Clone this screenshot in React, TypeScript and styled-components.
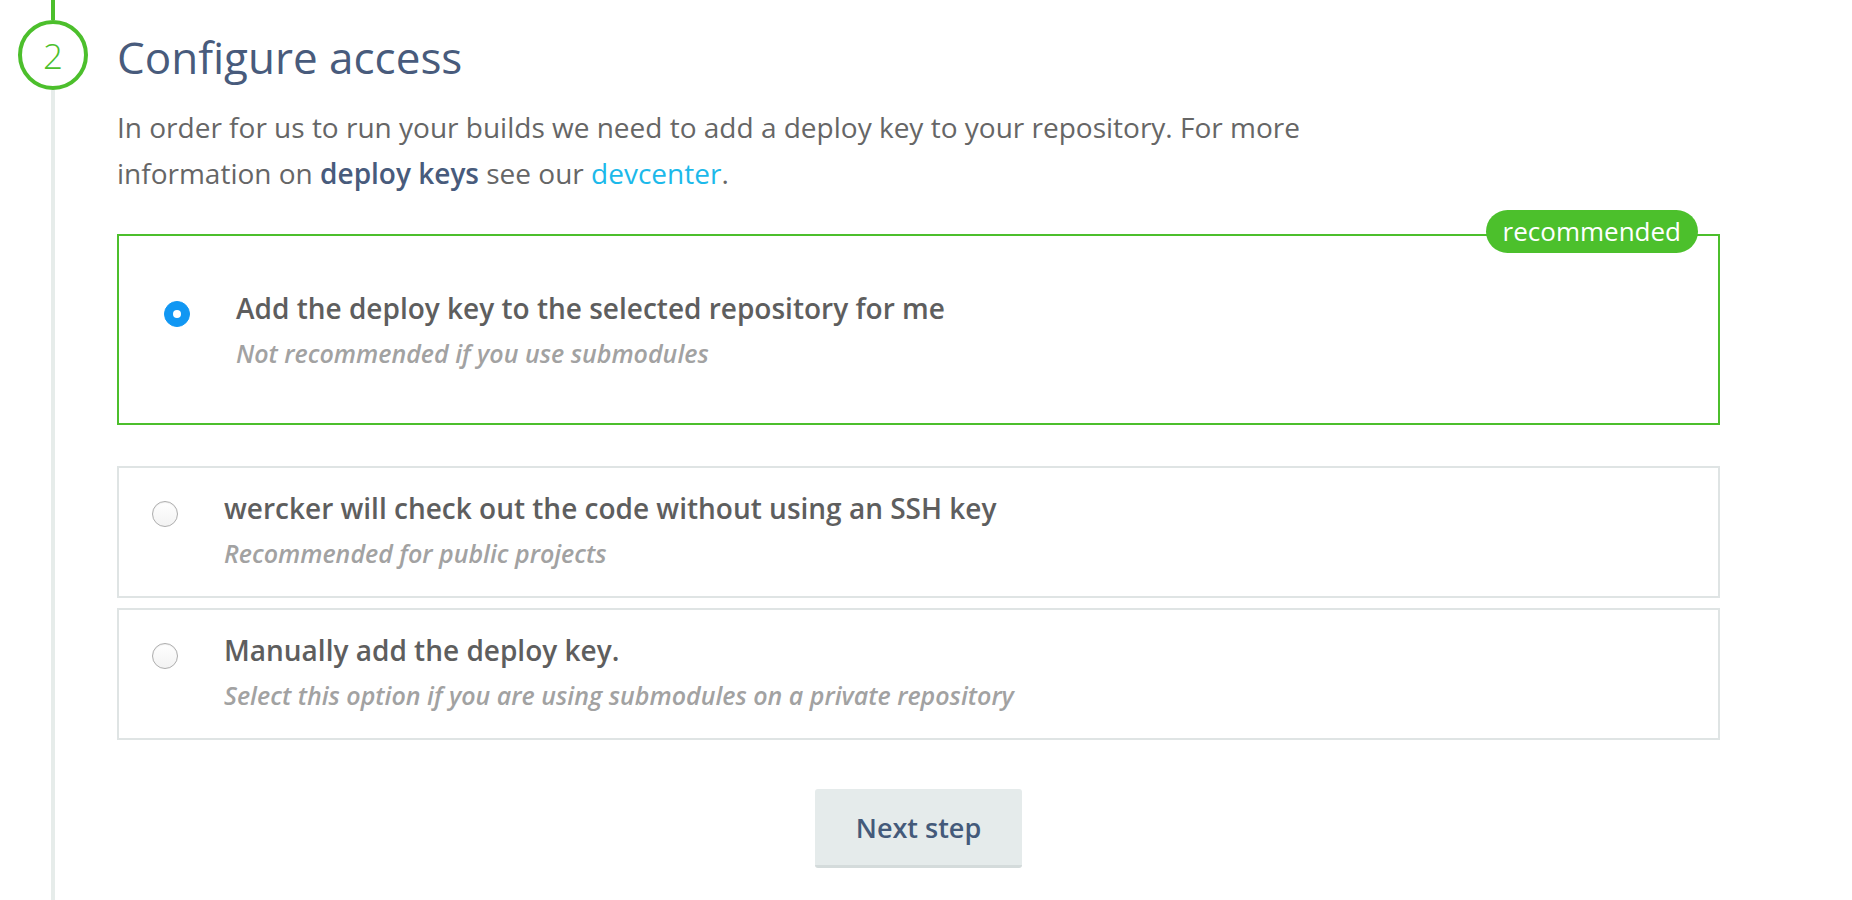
import React, { useState } from "react";
import styled, { createGlobalStyle } from "styled-components";

const GlobalStyle = createGlobalStyle`
  html, body {
    margin: 0;
    padding: 0;
    background: #ffffff;
  }
  body {
    font-family: "Open Sans", "Noto Sans", "Liberation Sans", sans-serif;
    -webkit-font-smoothing: antialiased;
  }
  * { box-sizing: border-box; }
`;

const Page = styled.div`
  display: flex;
  min-height: 100vh;
  gap: 11px;
`;

const Rail = styled.div`
  width: 106px;
  flex: none;
  display: flex;
  flex-direction: column;
  align-items: center;
`;

const RailSegment = styled.div<{ $done?: boolean; $grow?: boolean }>`
  width: 4px;
  height: ${(p) => (p.$grow ? "auto" : "20px")};
  flex: ${(p) => (p.$grow ? "1 1 auto" : "none")};
  background: ${(p) => (p.$done ? "#4cbf2c" : "#e6ecea")};
`;

const StepBadge = styled.div`
  width: 70px;
  height: 70px;
  flex: none;
  border: 4px solid #4cbf2c;
  border-radius: 50%;
  display: flex;
  align-items: center;
  justify-content: center;
  color: #4cbf2c;
  font-size: 35px;
  font-weight: 300;
  line-height: 1;
`;

const Content = styled.div`
  flex: 0 1 1603px;
  display: flex;
  flex-direction: column;
  padding-top: 32px;
`;

const Title = styled.h1`
  margin: 0;
  font-size: 44px;
  line-height: 50px;
  font-weight: 400;
  color: #485b7c;
`;

const Intro = styled.p`
  margin: 22px 0 0;
  max-width: 1280px;
  font-size: 28px;
  line-height: 46px;
  color: #666666;
`;

const Strong = styled.strong`
  font-weight: 600;
  color: #485b7c;
`;

const Link = styled.a`
  color: #1cb9ea;
  text-decoration: none;
`;

const Options = styled.div`
  display: flex;
  flex-direction: column;
  margin-top: 38px;
`;

const OptionBox = styled.label<{ $selected?: boolean }>`
  position: relative;
  display: flex;
  align-items: flex-start;
  gap: 46px;
  cursor: pointer;
  border: 2px solid ${(p) => (p.$selected ? "#4cbf2c" : "#dfe4e4")};
  padding: ${(p) => (p.$selected ? "50px 40px 47px 45px" : "18px 33px 20px 33px")};
  margin-bottom: ${(p) => (p.$selected ? "41px" : "10px")};
`;

const Recommended = styled.span`
  position: absolute;
  top: -26px;
  right: 20px;
  height: 43px;
  padding: 0 17px;
  border-radius: 22px;
  background: #4cc02c;
  color: #ffffff;
  font-size: 26px;
  line-height: 43px;
  font-weight: 400;
`;

const RadioMark = styled.span<{ $checked?: boolean; $offset: number }>`
  flex: none;
  width: 26px;
  height: 26px;
  margin-top: ${(p) => p.$offset}px;
  border-radius: 50%;
  display: flex;
  align-items: center;
  justify-content: center;
  background: ${(p) => (p.$checked ? "#1197f3" : "linear-gradient(#ffffff, #f3f3f3)")};
  border: 1px solid ${(p) => (p.$checked ? "#1197f3" : "#adadad")};
  box-shadow: ${(p) => (p.$checked ? "none" : "inset 0 1px 1px rgba(0,0,0,0.06)")};

  &::after {
    content: "";
    display: ${(p) => (p.$checked ? "block" : "none")};
    width: 8px;
    height: 8px;
    border-radius: 50%;
    background: #ffffff;
  }
`;

const HiddenInput = styled.input`
  position: absolute;
  opacity: 0;
  width: 0;
  height: 0;
  margin: 0;
`;

const OptionText = styled.span`
  display: flex;
  flex-direction: column;
`;

const OptionLabel = styled.span`
  font-size: 28px;
  line-height: 45px;
  font-weight: 600;
  color: #5e5e5e;
`;

const OptionHint = styled.span`
  font-size: 25px;
  line-height: 45px;
  font-style: italic;
  font-weight: 600;
  color: #a2a2a2;
`;

const Actions = styled.div`
  display: flex;
  justify-content: center;
  margin-top: 39px;
  padding-bottom: 30px;
`;

const NextButton = styled.button`
  width: 207px;
  height: 79px;
  border: none;
  border-bottom: 3px solid #d4dbdb;
  border-radius: 3px;
  background: #e5ebeb;
  color: #445a7a;
  font-family: inherit;
  font-size: 27px;
  font-weight: 600;
  cursor: pointer;
`;

type Option = {
  id: string;
  label: string;
  hint: string;
  recommended?: boolean;
};

const options: Option[] = [
  {
    id: "auto",
    label: "Add the deploy key to the selected repository for me",
    hint: "Not recommended if you use submodules",
    recommended: true,
  },
  {
    id: "none",
    label: "wercker will check out the code without using an SSH key",
    hint: "Recommended for public projects",
  },
  {
    id: "manual",
    label: "Manually add the deploy key.",
    hint: "Select this option if you are using submodules on a private repository",
  },
];

export default function App() {
  const [selected, setSelected] = useState("auto");
  return (
    <>
      <GlobalStyle />
      <Page>
        <Rail>
          <RailSegment $done />
          <StepBadge>2</StepBadge>
          <RailSegment $grow />
        </Rail>
        <Content>
          <Title>Configure access</Title>
          <Intro>
            In order for us to run your builds we need to add a deploy key to your repository. For more
            information on <Strong>deploy keys</Strong> see our <Link href="#">devcenter</Link>.
          </Intro>
          <Options>
            {options.map((o) => {
              const isSel = selected === o.id;
              return (
                <OptionBox key={o.id} $selected={isSel}>
                  <HiddenInput
                    type="radio"
                    name="access"
                    checked={isSel}
                    onChange={() => setSelected(o.id)}
                  />
                  {o.recommended && <Recommended>recommended</Recommended>}
                  <RadioMark $checked={isSel} $offset={15} />
                  <OptionText>
                    <OptionLabel>{o.label}</OptionLabel>
                    <OptionHint>{o.hint}</OptionHint>
                  </OptionText>
                </OptionBox>
              );
            })}
          </Options>
          <Actions>
            <NextButton type="button">Next step</NextButton>
          </Actions>
        </Content>
      </Page>
    </>
  );
}
